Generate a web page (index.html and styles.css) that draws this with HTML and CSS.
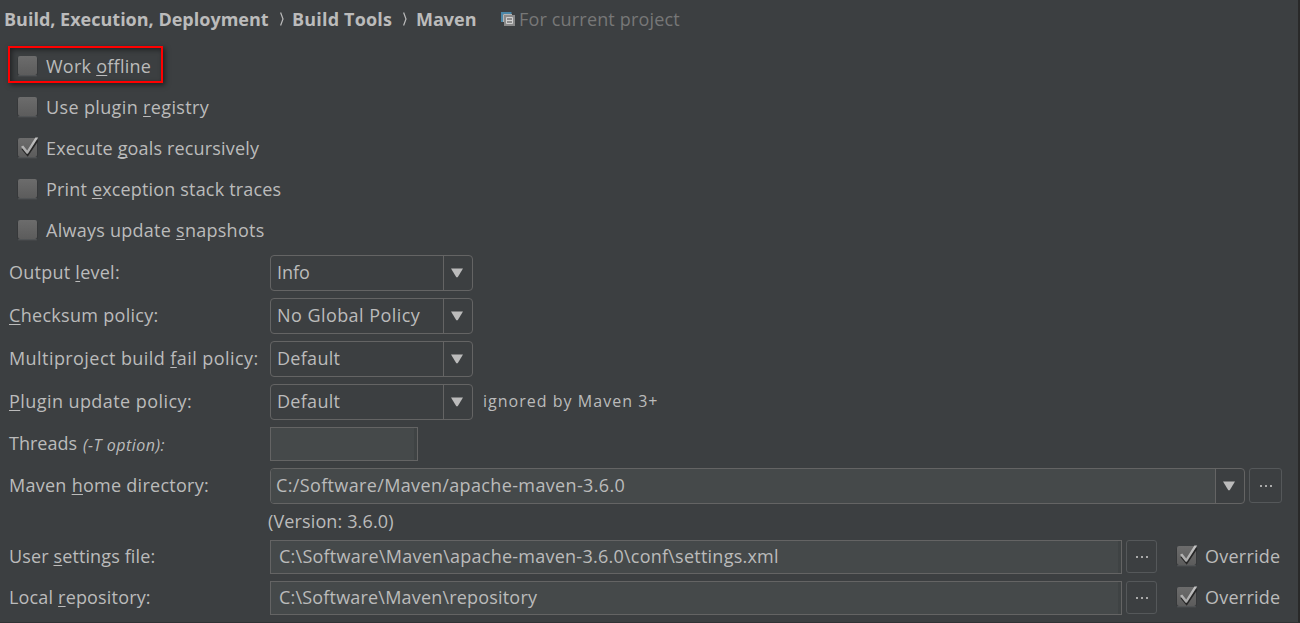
FILE: index.html
```
<!DOCTYPE html>
<html lang="en">
<head>
<meta charset="utf-8">
<title>Maven settings</title>
<link rel="stylesheet" href="styles.css">
</head>
<body>
<svg width="0" height="0" class="defs">
  <defs>
    <linearGradient id="box" x1="0" y1="0" x2="0" y2="1"><stop offset="0" stop-color="#6c6c6c"/><stop offset="1" stop-color="#5c5c5c"/></linearGradient>
    <linearGradient id="tick" x1="0" y1="0" x2="0" y2="1"><stop offset="0" stop-color="#c4c4c4"/><stop offset="1" stop-color="#a8a8a8"/></linearGradient>
    <symbol id="off" viewBox="0 0 22 22">
      <rect x=".5" y="1.5" width="20" height="20" rx="3" fill="#303335"/>
      <rect x="1" y="20" width="19" height="1.6" rx=".8" fill="#505355"/>
      <rect x="1" y="1" width="19" height="19" rx="2" fill="url(#box)"/>
    </symbol>
    <symbol id="on" viewBox="0 0 22 22">
      <use href="#off"/>
      <path d="M5.5 11.5 10.6 17.6 20.3 3" fill="none" stroke="#262626" stroke-width="2.6"/>
      <path d="M4 9.8 6.2 8.4 10.2 13.4 18.4.6 21.2.6 10.9 16.8 9.6 16.8Z" fill="url(#tick)"/>
    </symbol>
    <symbol id="arrow" viewBox="0 0 12 10"><path d="M0 .5H12L6.7 9.2H5.3Z" fill="#bbb"/></symbol>
  </defs>
</svg>
<main class="panel">
  <header class="crumbs">
    <span class="c1">Build, Execution, Deployment</span>
    <svg class="sep" viewBox="0 0 4 14"><path d="M.6.5 3 7 .6 13.5" fill="none" stroke="#bbb" stroke-width="1.2"/></svg>
    <span class="c2">Build Tools</span>
    <svg class="sep" viewBox="0 0 4 14"><path d="M.6.5 3 7 .6 13.5" fill="none" stroke="#bbb" stroke-width="1.2"/></svg>
    <span class="c3">Maven</span>
    <svg class="copy" viewBox="0 0 14 14">
      <path d="M1 10V1H10.5" fill="none" stroke="#4b87a8" stroke-width="2"/>
      <path d="M2.5 10V2.5H11" fill="none" stroke="#b5b5b5" stroke-width="1"/>
      <path d="M3 3H14V14H3Z" fill="#8a8a8a"/>
      <path d="M5.5 5.5H11.5V11.5H5.5ZM5.5 8.5H11.5" fill="none" stroke="#d0d0d0"/>
    </svg>
    <span class="hint">For current project</span>
  </header>

  <section class="checks">
    <label class="check marked"><svg class="cb"><use href="#off"/></svg><span class="k1">Work <u>o</u>ffline</span></label>
    <label class="check"><svg class="cb"><use href="#off"/></svg><span class="k2">Use plugin <u>r</u>egistry</span></label>
    <label class="check"><svg class="cb"><use href="#on"/></svg><span class="k3">Execute <u>g</u>oals recursively</span></label>
    <label class="check"><svg class="cb"><use href="#off"/></svg><span class="k4">Print <u>e</u>xception stack traces</span></label>
    <label class="check"><svg class="cb"><use href="#off"/></svg><span class="k5">Always update <u>s</u>napshots</span></label>
  </section>

  <section class="form">
    <div class="row"><div class="label"><span class="l1">Output <u>l</u>evel:</span></div><div class="combo"><div class="value"><span class="v1">Info</span></div><div class="drop"><svg class="arrow"><use href="#arrow"/></svg></div></div></div>
    <div class="row"><div class="label"><span class="l2"><u>C</u>hecksum policy:</span></div><div class="combo"><div class="value"><span class="v2">No Global Policy</span></div><div class="drop"><svg class="arrow"><use href="#arrow"/></svg></div></div></div>
    <div class="row"><div class="label"><span class="l3">Multiproject build <u>f</u>ail policy:</span></div><div class="combo"><div class="value"><span class="v3">Default</span></div><div class="drop"><svg class="arrow"><use href="#arrow"/></svg></div></div></div>
    <div class="row"><div class="label"><span class="l4"><u>P</u>lugin update policy:</span></div><div class="combo"><div class="value"><span class="v3">Default</span></div><div class="drop"><svg class="arrow"><use href="#arrow"/></svg></div></div><span class="note">ignored by Maven 3+</span></div>
    <div class="row short"><div class="label"><span class="l5">Threads</span><i>(-T option):</i></div><div class="field threads"></div></div>
    <div class="row"><div class="label"><span class="l6">Maven <u>h</u>ome directory:</span></div><div class="combo wide"><div class="value"><span class="v5">C:/Software/Maven/apache-maven-3.6.0</span></div><div class="drop"><svg class="arrow"><use href="#arrow"/></svg></div></div><div class="browse big"><b></b><b></b><b></b></div></div>
    <div class="version"><span class="v6">(Version: 3.6.0)</span></div>
    <div class="row short"><div class="label"><span class="l7">User <u>s</u>ettings file:</span></div><div class="field path"><span class="v7">C:\Software\Maven\apache-maven-3.6.0\conf\settings.xml</span></div><div class="browse"><b></b><b></b><b></b></div><label class="override"><svg class="cb"><use href="#on"/></svg><span class="ov">Override</span></label></div>
    <div class="row short"><div class="label"><span class="l8">Local <u>r</u>epository:</span></div><div class="field path"><span class="v8">C:\Software\Maven\repository</span></div><div class="browse"><b></b><b></b><b></b></div><label class="override"><svg class="cb"><use href="#on"/></svg><span class="ov">Override</span></label></div>
  </section>
</main>
</body>
</html>
```
FILE: styles.css
```
* { box-sizing: border-box; }
body { margin: 0; background: #3c3f41; color: #bbb; font: 18px/24px "Open Sans", "Noto Sans", sans-serif; }
.defs { display: block; height: 0; }
.panel { width: 1300px; height: 623px; overflow: hidden; border-right: 2px solid #292929; border-bottom: 1px solid #303234; }
span, i { white-space: nowrap; }
u { text-decoration: underline; text-decoration-thickness: 1px; text-underline-offset: 2px; text-decoration-skip-ink: none; }
.crumbs { display: flex; align-items: center; height: 46px; padding: 0 0 9px 4px; font-weight: 700; }
.c1 { width: 276px; }
.c2 { width: 111px; margin-left: 8px; letter-spacing: .18px; }
.c3 { width: 85px; margin-left: 9px; }
.sep { width: 4px; height: 14px; margin-top: 1px; }
.copy { width: 14px; height: 14px; margin-right: 4px; }
.hint { color: #777; font-weight: 400; letter-spacing: .17px; }
.checks { display: flex; flex-direction: column; align-items: flex-start; gap: 4px; padding-left: 8px; }
.check { display: flex; align-items: center; height: 37px; width: 300px; padding: 2px 0 0 9px; border: 0 solid red; }
.check.marked { width: 155px; padding-left: 7px; border-width: 2px; box-shadow: 2px 2px 5px rgba(0,0,0,.5), inset 2px 2px 5px rgba(0,0,0,.45); }
.cb { width: 22px; height: 22px; margin-right: 7px; flex: none; }
.k1 { letter-spacing: .25px; }
.k2 { letter-spacing: .36px; }
.k3 { letter-spacing: .16px; }
.k4 { letter-spacing: .17px; }
.k5 { letter-spacing: .26px; }
.form { display: flex; flex-direction: column; gap: 7px; padding: 8px 0 0 9px; }
.row { display: flex; height: 36px; }
.row.short { height: 34px; }
.label { width: 261px; display: flex; align-items: center; padding-bottom: 2px; }
.label i { font-size: 16px; margin-left: 6px; padding-top: 3px; letter-spacing: .5px; }
.l1 { letter-spacing: .25px; }
.l2 { letter-spacing: .3px; }
.l3 { letter-spacing: .43px; }
.l4 { letter-spacing: .43px; }
.l6 { letter-spacing: .27px; }
.l7 { letter-spacing: .12px; }
.l8 { letter-spacing: .17px; }
.v2 { letter-spacing: .44px; }
.v3 { letter-spacing: .3px; }
.v5 { letter-spacing: .36px; }
.v6 { letter-spacing: .13px; }
.v7 { letter-spacing: .24px; }
.v8 { letter-spacing: .19px; }
.ov { letter-spacing: .25px; }
.combo { display: flex; width: 203px; border: 1px solid #646464; border-radius: 4px; }
.combo.wide { width: 975px; }
.value { flex: 1; display: flex; align-items: center; padding: 0 0 2px 6px; border-right: 1px solid #646464; }
.wide .value { padding-left: 5px; background: #45494a; border-radius: 3px 0 0 3px; }
.drop { width: 28px; display: flex; align-items: center; justify-content: center; padding-right: 2px; }
.arrow { width: 12px; height: 10px; }
.note { font-size: 16px; line-height: 34px; margin-left: 10px; letter-spacing: 1.02px; }
.field { display: flex; align-items: center; background: #45494a; border: 1px solid #646464; box-shadow: inset -3px 0 #3f4344; }
.threads { width: 148px; }
.path { width: 852px; padding: 0 0 2px 8px; }
.browse { display: flex; align-items: center; justify-content: center; gap: 3px; width: 31px; height: 33px; margin-left: 4px; border: 1px solid #55585a; border-radius: 3px; }
.browse.big { width: 33px; height: 35px; }
.browse b { width: 2px; height: 2px; background: #aaa; }
.version { height: 22px; padding-left: 259px; line-height: 20px; }
.version span { display: block; line-height: 20px; }
.override { display: flex; align-items: center; margin-left: 19px; padding-bottom: 2px; }
```
